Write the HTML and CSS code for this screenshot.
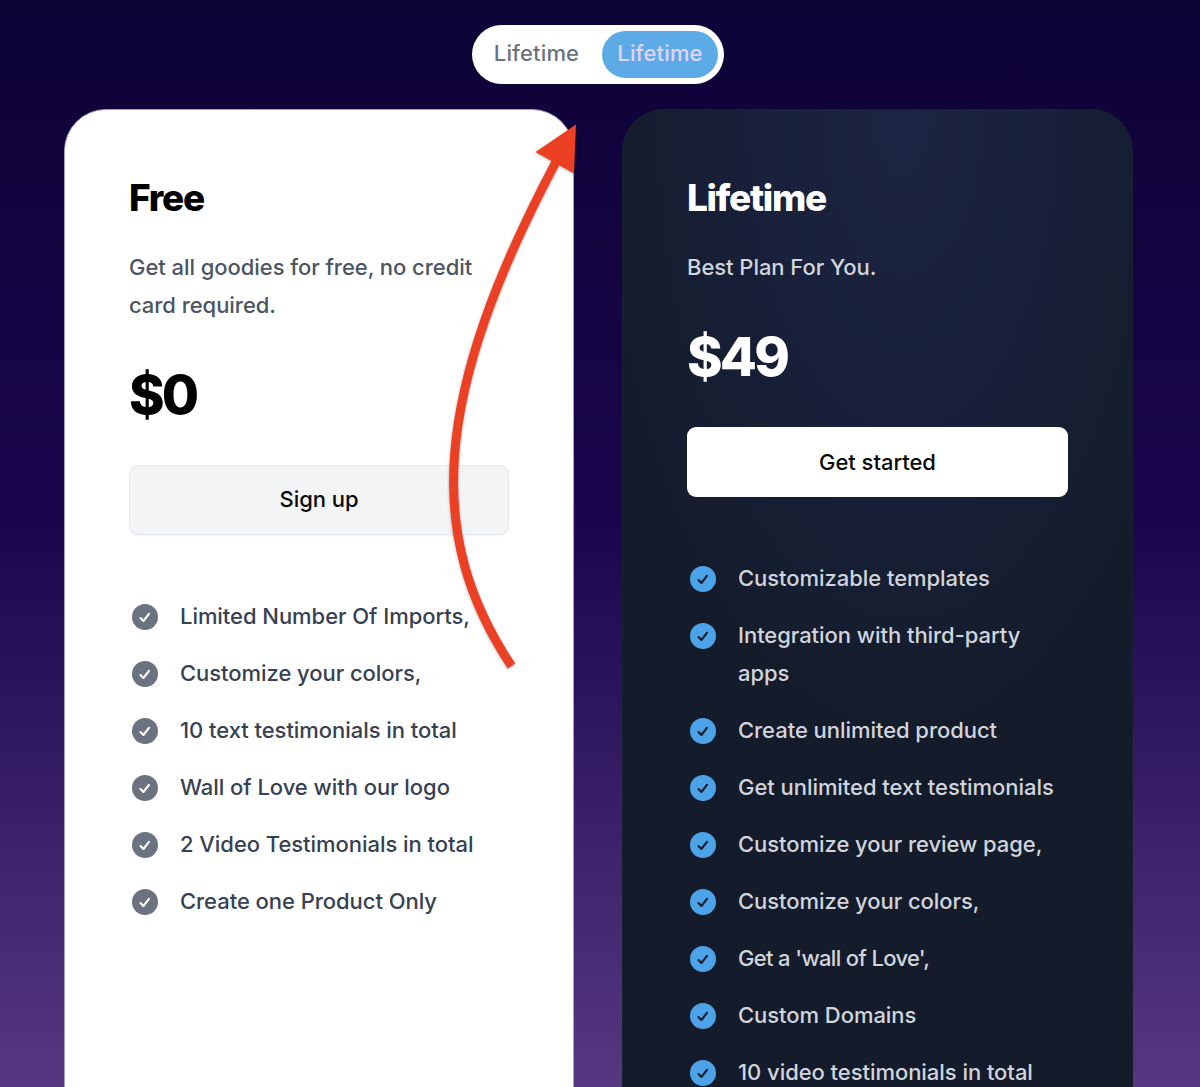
FILE: index.html
```html
<!DOCTYPE html>
<html lang="en">
<head>
    <meta charset="UTF-8">
    <meta name="viewport" content="width=device-width, initial-scale=1.0">
    <title>Pricing</title>
    <link rel="stylesheet" href="styles.css">
</head>
<body>
    <svg class="sprite">
        <symbol id="check" viewBox="0 0 32 32">
            <circle cx="16" cy="16" r="13" fill="currentColor"/>
            <path class="tick" d="M11.500 17.100l2.900 2.900 5.600-7.200"/>
        </symbol>
    </svg>

    <main class="pricing">
        <div class="toggle">
            <button class="toggle-btn">Lifetime</button>
            <button class="toggle-btn active">Lifetime</button>
        </div>

        <div class="plans">
            <section class="card">
                <h2>Free</h2>
                <p class="desc">Get all goodies for free, no credit card required.</p>
                <p class="price">$0</p>
                <a href="#" class="btn btn-light">Sign up</a>
                <ul class="features">
                    <li><svg><use href="#check"/></svg><span>Limited Number Of Imports,</span></li>
                    <li><svg><use href="#check"/></svg><span>Customize your colors,</span></li>
                    <li><svg><use href="#check"/></svg><span>10 text testimonials in total</span></li>
                    <li><svg><use href="#check"/></svg><span>Wall of Love with our logo</span></li>
                    <li><svg><use href="#check"/></svg><span>2 Video Testimonials in total</span></li>
                    <li><svg><use href="#check"/></svg><span>Create one Product Only</span></li>
                </ul>
            </section>

            <section class="card card-dark">
                <h2>Lifetime</h2>
                <p class="desc">Best Plan For You.</p>
                <p class="price">$49</p>
                <a href="#" class="btn">Get started</a>
                <ul class="features">
                    <li><svg><use href="#check"/></svg><span>Customizable templates</span></li>
                    <li><svg><use href="#check"/></svg><span>Integration with third-party apps</span></li>
                    <li><svg><use href="#check"/></svg><span>Create unlimited product</span></li>
                    <li><svg><use href="#check"/></svg><span>Get unlimited text testimonials</span></li>
                    <li><svg><use href="#check"/></svg><span>Customize your review page,</span></li>
                    <li><svg><use href="#check"/></svg><span>Customize your colors,</span></li>
                    <li><svg><use href="#check"/></svg><span class="tight">Get a 'wall of Love',</span></li>
                    <li><svg><use href="#check"/></svg><span>Custom Domains</span></li>
                    <li><svg><use href="#check"/></svg><span>10 video testimonials in total</span></li>
                </ul>
            </section>
        </div>

        <svg class="arrow" viewBox="0 0 1200 1087">
            <path class="arrow-line" d="M511.500 666C426 537 430 398 558 158"/>
            <path class="arrow-head" d="M576 124.500L535.500 152L574 173.500z"/>
        </svg>
    </main>
</body>
</html>
```

FILE: styles.css
```css
* {
    box-sizing: border-box;
    margin: 0;
    padding: 0;
}
body {
    height: 1087px;
    overflow: hidden;
    font-family: Inter, "Liberation Sans", sans-serif;
    font-size: 22px;
    font-weight: 450;
    line-height: 38px;
    letter-spacing: -0.05px;
    background: linear-gradient(#0d0335 0%, #1a064e 48%, #563782 100%);
}
.sprite {
    display: none;
}
.pricing {
    position: relative;
    height: 1087px;
    padding: 25px 68px 0 64px;
    overflow: hidden;
}
.toggle {
    display: flex;
    width: 252px;
    height: 59px;
    margin: 0 auto 25px;
    padding: 6px;
    border-radius: 30px;
    background: #fff;
}
.toggle-btn {
    flex: 1;
    padding: 0 7px 3px 0;
    border: none;
    border-radius: 24px;
    background: none;
    color: #6b7280;
    font: 500 22px Inter, "Liberation Sans", sans-serif;
    letter-spacing: 0.15px;
}
.toggle-btn.active {
    flex: 0 0 116px;
    padding-right: 0;
    background: #5dabe6;
    color: #e2d3fb;
}
.plans {
    display: grid;
    grid-template-columns: 510px 511px;
    gap: 48px;
}
.card {
    height: 1100px;
    padding: 64px;
    border: 1px solid #a79cc4;
    border-radius: 42px;
    background: #fff;
}
h2 {
    margin-bottom: 26px;
    color: #000;
    font-size: 37px;
    font-weight: 800;
    line-height: 48px;
    letter-spacing: -1.3px;
}
.desc {
    margin-bottom: 39px;
    color: #4b5563;
}
.price {
    margin-bottom: 38px;
    font-size: 54px;
    font-weight: 800;
    line-height: 64px;
    letter-spacing: -2.8px;
}
.btn {
    display: block;
    height: 70px;
    margin-bottom: 62px;
    border-radius: 9px;
    background: #fff;
    color: #0a0a0a;
    font-weight: 550;
    line-height: 70px;
    text-align: center;
    text-decoration: none;
}
.btn-light {
    border: 1px solid #e5e7eb;
    background: #f3f4f6;
    box-shadow: 0 1px 2px rgba(0, 0, 0, 0.05);
    line-height: 67px;
}
.features {
    display: flex;
    flex-direction: column;
    gap: 19px;
    list-style: none;
    color: #374151;
}
.features li {
    display: flex;
    gap: 19px;
}
.features svg {
    flex: none;
    width: 32px;
    height: 32px;
    margin-top: 4px;
    color: #6b7280;
    --tick: #fff;
}
.features .tight {
    letter-spacing: -0.65px;
}
.tick {
    fill: none;
    stroke: var(--tick);
    stroke-width: 2.1;
    stroke-linecap: round;
    stroke-linejoin: round;
}
.card-dark {
    border-color: #18202e;
    background: radial-gradient(ellipse 300px 620px at 55% 0, #1b2442 0%, #18203a 50%, #141c2c 100%);
    color: #fff;
}
.card-dark h2 {
    color: #fff;
}
.card-dark .desc,
.card-dark .features {
    color: #d1d5db;
}
.card-dark .features svg {
    color: #4ca3e8;
    --tick: #141c2c;
}
.arrow {
    position: absolute;
    top: 0;
    left: 0;
    width: 1200px;
    height: 1087px;
    filter: drop-shadow(0 1px 1.5px rgba(0, 0, 0, 0.3));
    pointer-events: none;
}
.arrow-line {
    fill: none;
    stroke: #ec4024;
    stroke-width: 9;
}
.arrow-head {
    fill: #ec4024;
}
```
